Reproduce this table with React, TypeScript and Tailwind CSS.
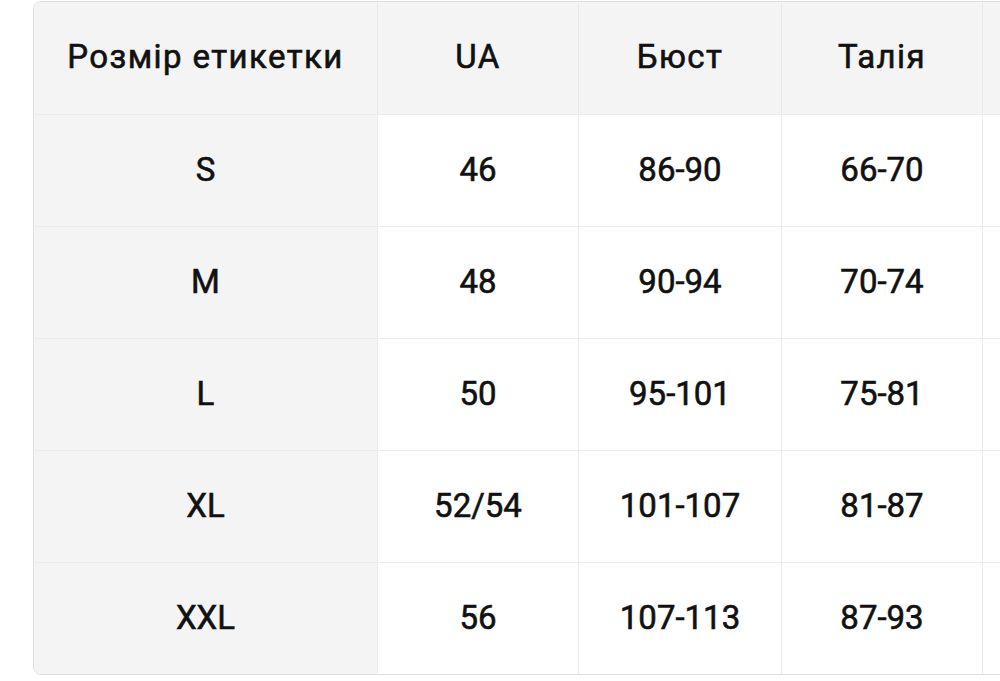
const headers = ["Розмір етикетки", "UA", "Бюст", "Талія", ""];

const rows = [
  ["S", "46", "86-90", "66-70", ""],
  ["M", "48", "90-94", "70-74", ""],
  ["L", "50", "95-101", "75-81", ""],
  ["XL", "52/54", "101-107", "81-87", ""],
  ["XXL", "56", "107-113", "87-93", ""],
];

const widths = ["w-[343px]", "w-[201px]", "w-[203px]", "w-[201px]", "w-[220px]"];

export default function App() {
  return (
    <div className="w-[1000px] h-[681px] overflow-hidden bg-white font-['Roboto',sans-serif] text-[#111] [-webkit-text-stroke:0.6px_#111]">
      <div className="ml-[33px] mt-[1px] w-[1200px] rounded-lg border border-[#dedede] overflow-hidden">
        <div className="flex h-[112px] bg-[#f4f4f4]">
          {headers.map((h, i) => (
            <div
              key={i}
              className={`${widths[i]} shrink-0 flex items-center justify-center pb-[3px] text-[33px] tracking-[1.4px] font-normal ${i > 0 ? "border-l border-[#e9e9e9]" : ""}`}
            >
              {h}
            </div>
          ))}
        </div>
        {rows.map((r) => (
          <div key={r[0]} className="flex h-[112px] border-t border-[#ececec]">
            {r.map((c, i) => (
              <div
                key={i}
                className={`${widths[i]} shrink-0 flex items-center justify-center pb-[1px] text-[33px] font-normal ${i === 0 ? "bg-[#f4f4f4]" : "bg-white border-l border-[#ececec]"}`}
              >
                {c}
              </div>
            ))}
          </div>
        ))}
      </div>
    </div>
  );
}
